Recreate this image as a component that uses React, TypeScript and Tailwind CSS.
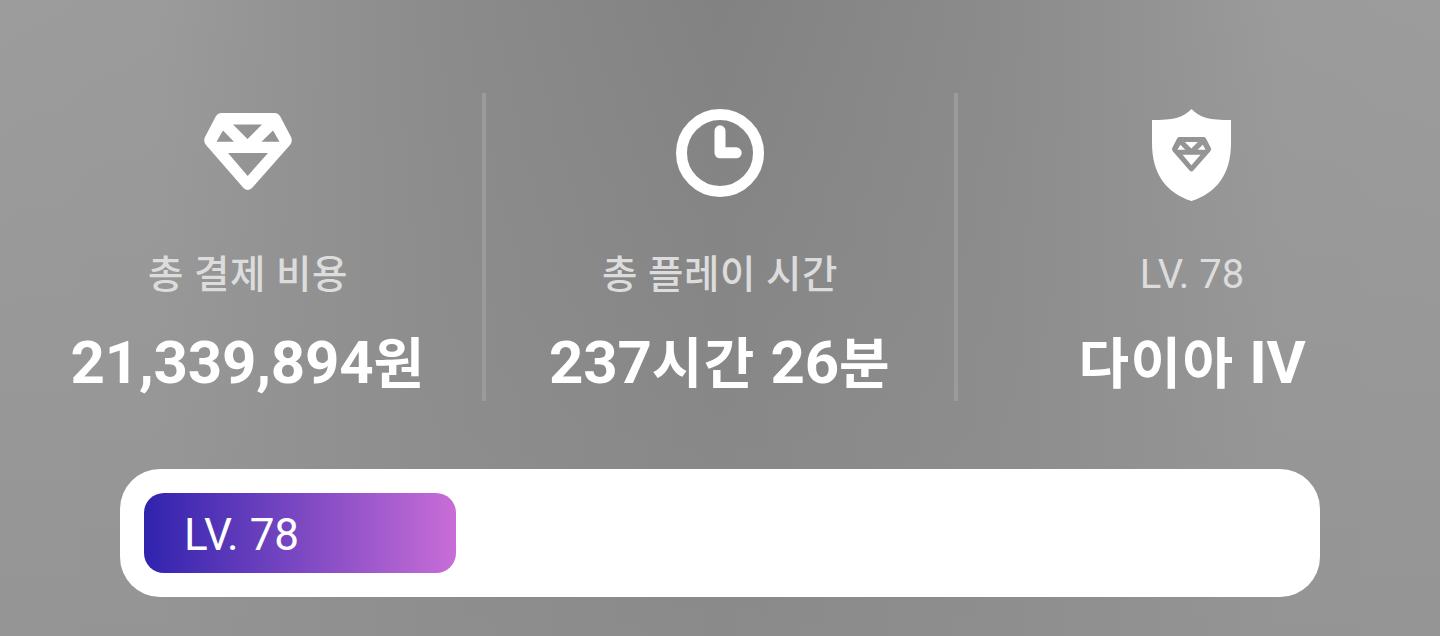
import React from 'react';

const DIAMOND =
  'M21 8 H75 Q78 8 80 11 L91 32 Q93 36 90 40 L52 83 Q47.7 87 43.5 83 L6 40 Q3 36 5 32 L16 11 Q18 8 21 8 Z ' +
  'M33 19.5 H62 L47.5 34 Z M23 25.5 L16.5 36.8 H34 Z M73 25.5 L61.5 36.8 H79.5 Z M28 48 H68 L47.7 71 Z';

const DiamondIcon = () => (
  <svg viewBox="0 0 96 96" className="size-24" fill="currentColor">
    <path d={DIAMOND} fillRule="evenodd" />
  </svg>
);

const ClockIcon = () => (
  <svg viewBox="0 0 96 96" className="size-24" fill="none" stroke="currentColor" strokeWidth={11}>
    <circle cx="48" cy="48" r="38.5" />
    <path d="M48 25.8 V47.8 H64.2" strokeLinecap="round" strokeLinejoin="round" />
  </svg>
);

const ShieldIcon = () => (
  <svg viewBox="0 0 96 96" className="size-24" fill="currentColor">
    <mask id="tier">
      <rect width="96" height="96" fill="white" />
      <path d={DIAMOND} fillRule="evenodd" fill="black" transform="translate(26.1 28.4) scale(0.447)" />
    </mask>
    <path
      mask="url(#tier)"
      d="M47.5 4 C39 13 29 15 8 15 V38 C8 70 23 88 47.5 96 C72 88 87 70 87 38 V15 C66 15 56 13 47.5 4 Z"
    />
  </svg>
);

// Hangul runs are set a little smaller than the Latin digits around them
const Mixed: React.FC<{ text: string; hangul: string }> = ({ text, hangul }) => (
  <>
    {text.split(/([가-힣]+)/).map((part, i) =>
      i % 2 ? (
        <span key={i} className={hangul}>
          {part}
        </span>
      ) : (
        part
      )
    )}
  </>
);

interface StatProps {
  icon: React.ReactNode;
  label: string;
  value: string;
}

const Stat: React.FC<StatProps> = ({ icon, label, value }) => (
  <div className="flex w-[468px] flex-col items-center pt-3 whitespace-nowrap">
    {icon}
    <span className="mt-[50px] text-[40px] leading-[48px] text-[#dcdcdc]">
      <Mixed text={label} hangul="text-[38.5px] font-medium tracking-[0.6px]" />
    </span>
    <span className="mt-7 text-[60px] leading-[72px] font-bold tracking-[-0.2px]">
      <Mixed text={value} hangul="text-[55px] tracking-[1.4px]" />
    </span>
  </div>
);

const Divider = () => <div className="w-1 bg-[#9b9b9b]" />;

const App: React.FC = () => {
  const level = 78;
  const progress = 27.09;

  return (
    <div className="h-[636px] w-[1440px] overflow-hidden bg-[linear-gradient(90deg,#9c9c9c_0%,#9b9b9b_11%,#939393_20%,#8b8b8b_31%,#828282_50%,#8b8b8b_69%,#939393_80%,#9b9b9b_89%,#9c9c9c_100%)] font-['Roboto','Noto_Sans_CJK_KR',sans-serif] text-white">
      <div className="h-full bg-linear-to-b from-[#909090]/0 to-[#909090]/60 pt-[93px]">
        {/* Summary */}
        <div className="flex h-[308px] px-[14px]">
          <Stat icon={<DiamondIcon />} label="총 결제 비용" value="21,339,894원" />
          <Divider />
          <Stat icon={<ClockIcon />} label="총 플레이 시간" value="237시간 26분" />
          <Divider />
          <Stat icon={<ShieldIcon />} label={`LV. ${level}`} value="다이아 IV" />
        </div>

        {/* Level progress */}
        <div className="mx-[120px] mt-[68px] h-32 rounded-[40px] bg-white p-6">
          <div
            className="flex h-20 items-center rounded-[20px] bg-linear-to-r/srgb from-[#3023ae] to-[#c86dd7] pt-1 pl-10 text-[44px]"
            style={{ width: `${progress}%` }}
          >
            LV. {level}
          </div>
        </div>
      </div>
    </div>
  );
};

export default App;
